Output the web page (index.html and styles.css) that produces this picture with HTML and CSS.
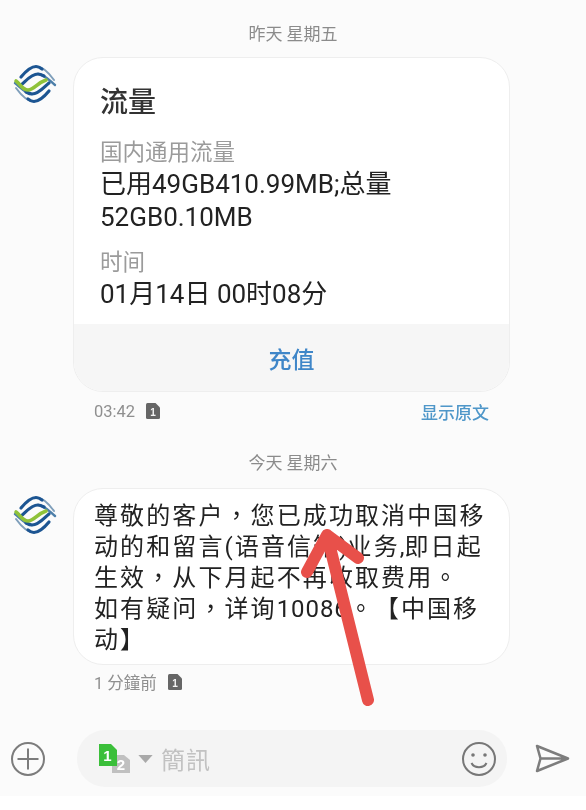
FILE: index.html
```html
<!DOCTYPE html>
<html lang="zh">
<head>
<meta charset="utf-8">
<title>信息</title>
<link rel="stylesheet" href="styles.css">
</head>
<body>
<div class="screen">
  <main class="thread">
    <div class="date date-first">昨天 星期五</div>
    <div class="msg">
      <svg class="logo" viewBox="0 0 44 44"><use href="#cmcc"/></svg>
      <div class="msg-body">
        <article class="bubble card">
          <div class="card-main">
            <h2 class="card-title">流量</h2>
            <div class="card-label">国内通用流量</div>
            <div class="card-value">已用49GB410.99MB;总量<br>52GB0.10MB</div>
            <div class="card-label card-label-gap">时间</div>
            <div class="card-value">01月14日 00时08分</div>
          </div>
          <div class="card-action">充值</div>
        </article>
        <div class="meta">
          <span class="meta-time">03:42</span>
          <svg class="sim" viewBox="0 0 14 16"><use href="#sim1"/></svg>
          <span class="meta-link">显示原文</span>
        </div>
      </div>
    </div>
    <div class="date date-second">今天 星期六</div>
    <div class="msg">
      <svg class="logo" viewBox="0 0 44 44"><use href="#cmcc"/></svg>
      <div class="msg-body">
        <article class="bubble text-bubble">尊敬的客户<span class="punct" lang="zh-TW">，</span>您已成功取消中国移<br>动的和留言(语音信箱<span class="tight">)</span>业务<span class="tight">,</span>即日起<br>生效<span class="punct" lang="zh-TW">，</span>从下月起不再收取费用<span class="punct" lang="zh-TW">。</span><br>如有疑问<span class="punct" lang="zh-TW">，</span>详询<span class="digits">10086</span><span class="punct" lang="zh-TW">。</span>【中国移<br>动】</article>
        <div class="meta meta-second">
          <span class="meta-time">1 分鐘前</span>
          <svg class="sim" viewBox="0 0 14 16"><use href="#sim1"/></svg>
        </div>
      </div>
    </div>
  </main>
  <footer class="composer">
    <svg class="plus" viewBox="0 0 36 36"><circle cx="18" cy="18" r="16" /><path d="M18 7.500V28.500M7.500 18H28.500"/></svg>
    <div class="input">
      <span class="sims">
        <svg class="sim-two" viewBox="0 0 18 18"><path d="M0 0H12L18 5V18H0Z"/><text x="9" y="15">2</text></svg>
        <svg class="sim-one" viewBox="0 0 18 22"><path d="M0 0H12L18 6V22H0Z"/><text x="8.500" y="17">1</text></svg>
      </span>
      <svg class="caret" viewBox="0 0 16 9"><path d="M0 0H16L8 9Z"/></svg>
      <span class="placeholder">簡訊</span>
      <svg class="smile" viewBox="0 0 36 36"><circle cx="18" cy="18" r="16"/><circle class="eye" cx="12" cy="14" r="1.800"/><circle class="eye" cx="24" cy="14" r="1.800"/><path d="M10.500 22C13 27.500 23 27.500 25.500 22"/></svg>
    </div>
    <svg class="send" viewBox="0 0 36 32"><path d="M2 3L33 15.500L2 28L5.500 15.500ZM5.500 15.500H33"/></svg>
  </footer>
  <svg class="arrow" viewBox="0 0 100 180"><path d="M68 171L27 6M7 43L27 6L58 29"/></svg>
</div>
<svg class="defs" width="0" height="0">
  <defs>
    <g id="cmcc-half" fill="none" stroke-linecap="round">
      <path d="M23 3.500C30 3.500 36 10 41 17" stroke="#7f9fbb" stroke-width="2"/>
      <path d="M25 11C31 11 36 17 42 22" stroke="#4d7fa9" stroke-width="2.400"/>
      <path d="M8 14C13 8 18 3.500 23 3.500C25 3.500 27 4.500 29 6" stroke="#1c5592" stroke-width="3.200"/>
      <path d="M8 22C13 18 18 11 25 11C27 11 29 12 31 13" stroke="#1c5592" stroke-width="3.200"/>
    </g>
    <g id="cmcc">
      <use href="#cmcc-half"/>
      <use href="#cmcc-half" transform="rotate(180 22 21)"/>
      <path d="M3 18C7 21 10 27 15 27C21 27 24 20 33 17" fill="none" stroke="#8fc23a" stroke-width="3.600" stroke-linecap="round"/>
    </g>
    <g id="sim1">
      <path d="M0 1.500Q0 0 1.500 0H9.500L14 4.500V14.500Q14 16 12.500 16H1.500Q0 16 0 14.500Z" fill="#666"/>
      <text x="7" y="13" text-anchor="middle" font-family="Liberation Sans, sans-serif" font-size="10" font-weight="700" fill="#f5f5f5">1</text>
    </g>
  </defs>
</svg>
</body>
</html>
```
FILE: styles.css
```css
* { box-sizing: border-box; }
html, body { margin: 0; padding: 0; }
body {
  width: 586px;
  height: 810px;
  overflow: hidden;
  background: #fff;
  font-family: "Roboto", "Noto Sans CJK SC", "Noto Sans", sans-serif;
  color: #303030;
}
.screen {
  position: relative;
  width: 586px;
  height: 810px;
  display: flex;
  flex-direction: column;
  filter: blur(0.4px);
}
.thread {
  background: #fbfbfb;
  height: 726px;
  padding-top: 23px;
  display: flex;
  flex-direction: column;
}
.date {
  text-align: center;
  font-size: 17px;
  line-height: 22px;
  color: #8b8b8b;
}
.date-first { margin-bottom: 12px; }
.date-second { margin-top: 31px; margin-bottom: 14px; }
.msg {
  display: flex;
  align-items: flex-start;
  padding-left: 13px;
}
.logo {
  width: 44px;
  height: 44px;
  margin-top: 6px;
  margin-right: 16px;
  flex: none;
}
.msg-body { width: 437px; }
.bubble {
  background: #fff;
  border: 1px solid #eeeeee;
  border-radius: 30px;
  overflow: hidden;
}
.card-main {
  height: 266px;
  padding: 26px 0 0 26px;
}
.card-title {
  margin: 0 0 14px;
  font-size: 28px;
  line-height: 38px;
  font-weight: 500;
  color: #333;
}
.card-label {
  font-size: 22.500px;
  line-height: 32px;
  color: #9b9b9b;
}
.card-label-gap { margin-top: 12px; }
.card-value {
  font-size: 26px;
  line-height: 33px;
  color: #222;
}
.card-action {
  height: 67px;
  background: #f6f6f6;
  text-align: center;
  font-size: 23px;
  line-height: 73px;
  font-weight: 500;
  color: #3f86c8;
}
.meta {
  display: flex;
  align-items: center;
  height: 20px;
  margin-top: 9px;
  padding-left: 21px;
  padding-right: 21px;
  font-size: 16.500px;
  color: #8f8f8f;
}
.meta-second { margin-top: 7px; }
.sim {
  width: 14px;
  height: 16px;
  margin-left: 11px;
}
.meta-link {
  margin-left: auto;
  font-size: 17px;
  font-weight: 500;
  color: #4f97c9;
}
.text-bubble {
  height: 177px;
  padding: 12px 0 0 20px;
  font-size: 24px;
  line-height: 31px;
  letter-spacing: 2.100px;
  white-space: nowrap;
  text-spacing-trim: space-all;
  color: #222;
}
.punct {
  font-family: "Noto Sans CJK TC", sans-serif;
  line-height: 0;
}
.tight {
  letter-spacing: 0;
}
.digits {
  letter-spacing: 0.900px;
}
.composer {
  position: relative;
  height: 70px;
  background: #fbfbfb;
  display: flex;
  align-items: flex-start;
  padding: 4px 0 0 10px;
}
.plus {
  width: 36px;
  height: 36px;
  margin-top: 11px;
  fill: none;
  stroke: #7c7c7c;
  stroke-width: 2;
}
.input {
  width: 430px;
  height: 57px;
  margin-left: 31px;
  background: #f4f4f4;
  border-radius: 28px;
  display: flex;
  align-items: center;
  padding-left: 22px;
}
.sims {
  position: relative;
  width: 33px;
  height: 30px;
  flex: none;
}
.sim-one, .sim-two { position: absolute; }
.sim-one {
  left: 0;
  top: 0;
  width: 18px;
  height: 22px;
  fill: #3bbf3a;
}
.sim-two {
  left: 13px;
  top: 11px;
  width: 18px;
  height: 18px;
  fill: #c0c0c0;
}
.sim-one text, .sim-two text {
  fill: #fff;
  font-family: "Liberation Sans", sans-serif;
  font-size: 15px;
  font-weight: 700;
  text-anchor: middle;
}
.caret {
  width: 15px;
  height: 8px;
  margin-left: 6px;
  fill: #a9a9a9;
}
.placeholder {
  margin-left: 8px;
  font-size: 24px;
  letter-spacing: 1px;
  color: #c2c2c2;
}
.smile {
  width: 36px;
  height: 36px;
  margin-left: auto;
  margin-right: 10px;
  fill: none;
  stroke: #777;
  stroke-width: 2;
}
.smile .eye { fill: #777; stroke: none; }
.send {
  width: 36px;
  height: 32px;
  margin-left: 28px;
  margin-top: 13px;
  fill: none;
  stroke: #7d7d7d;
  stroke-width: 2.500;
  stroke-linejoin: round;
}
.arrow {
  position: absolute;
  left: 300px;
  top: 529px;
  width: 100px;
  height: 180px;
  fill: none;
  stroke: #e8504a;
  stroke-width: 12;
  stroke-linecap: round;
  stroke-linejoin: round;
}
.defs { position: absolute; }
```
